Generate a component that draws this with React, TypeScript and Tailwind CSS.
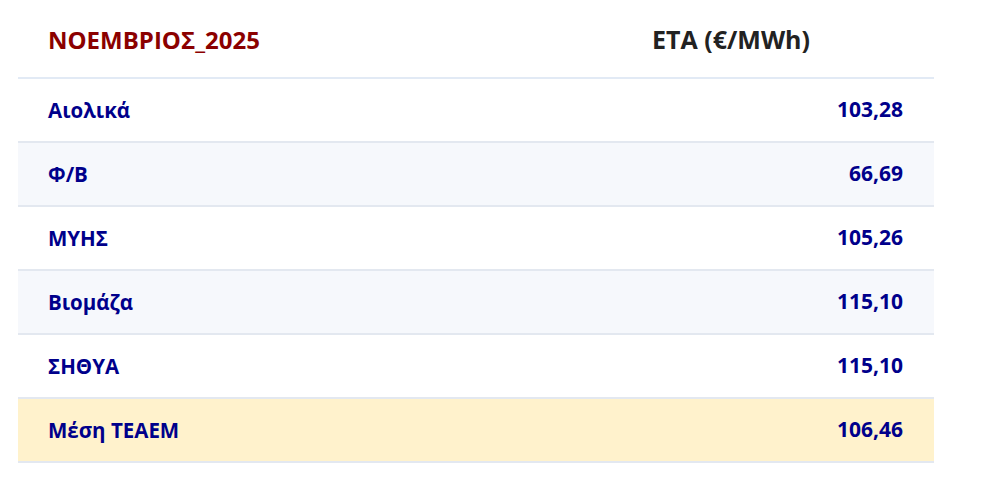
import React from "react";

const rows = [
  { label: "Αιολικά", value: "103,28", bg: "bg-white" },
  { label: "Φ/Β", value: "66,69", bg: "bg-[#f6f8fc]" },
  { label: "ΜΥΗΣ", value: "105,26", bg: "bg-white" },
  { label: "Βιομάζα", value: "115,10", bg: "bg-[#f6f8fc]" },
  { label: "ΣΗΘΥΑ", value: "115,10", bg: "bg-white" },
  { label: "Μέση ΤΕΑΕΜ", value: "106,46", bg: "bg-[#fff2cc]" },
];

export default function App() {
  return (
    <div className="w-[1007px] h-[499px] bg-white pl-[18px] font-['Open_Sans','Noto_Sans',sans-serif]">
      <table className="w-[916px] border-collapse">
        <thead>
          <tr className="border-b-2 border-[#e2eaf5]">
            <th className="w-[510px] h-[78px] pl-[30px] pt-[3px] text-left text-[24px] font-bold text-[#8b0000]">
              ΝΟΕΜΒΡΙΟΣ_2025
            </th>
            <th className="h-[78px] pt-[3px] text-center text-[25px] font-bold text-[#222222]">
              ΕΤΑ (€/MWh)
            </th>
          </tr>
        </thead>
        <tbody>
          {rows.map((r) => (
            <tr key={r.label} className={`${r.bg} border-b-2 border-[#e3e8f0]`}>
              <td className="h-[64px] pl-[30px] text-left text-[20.5px] font-bold text-[#00008b]">
                {r.label}
              </td>
              <td className="h-[64px] pr-[31px] text-right text-[21px] font-bold text-[#00008b]">
                {r.value}
              </td>
            </tr>
          ))}
        </tbody>
      </table>
    </div>
  );
}
